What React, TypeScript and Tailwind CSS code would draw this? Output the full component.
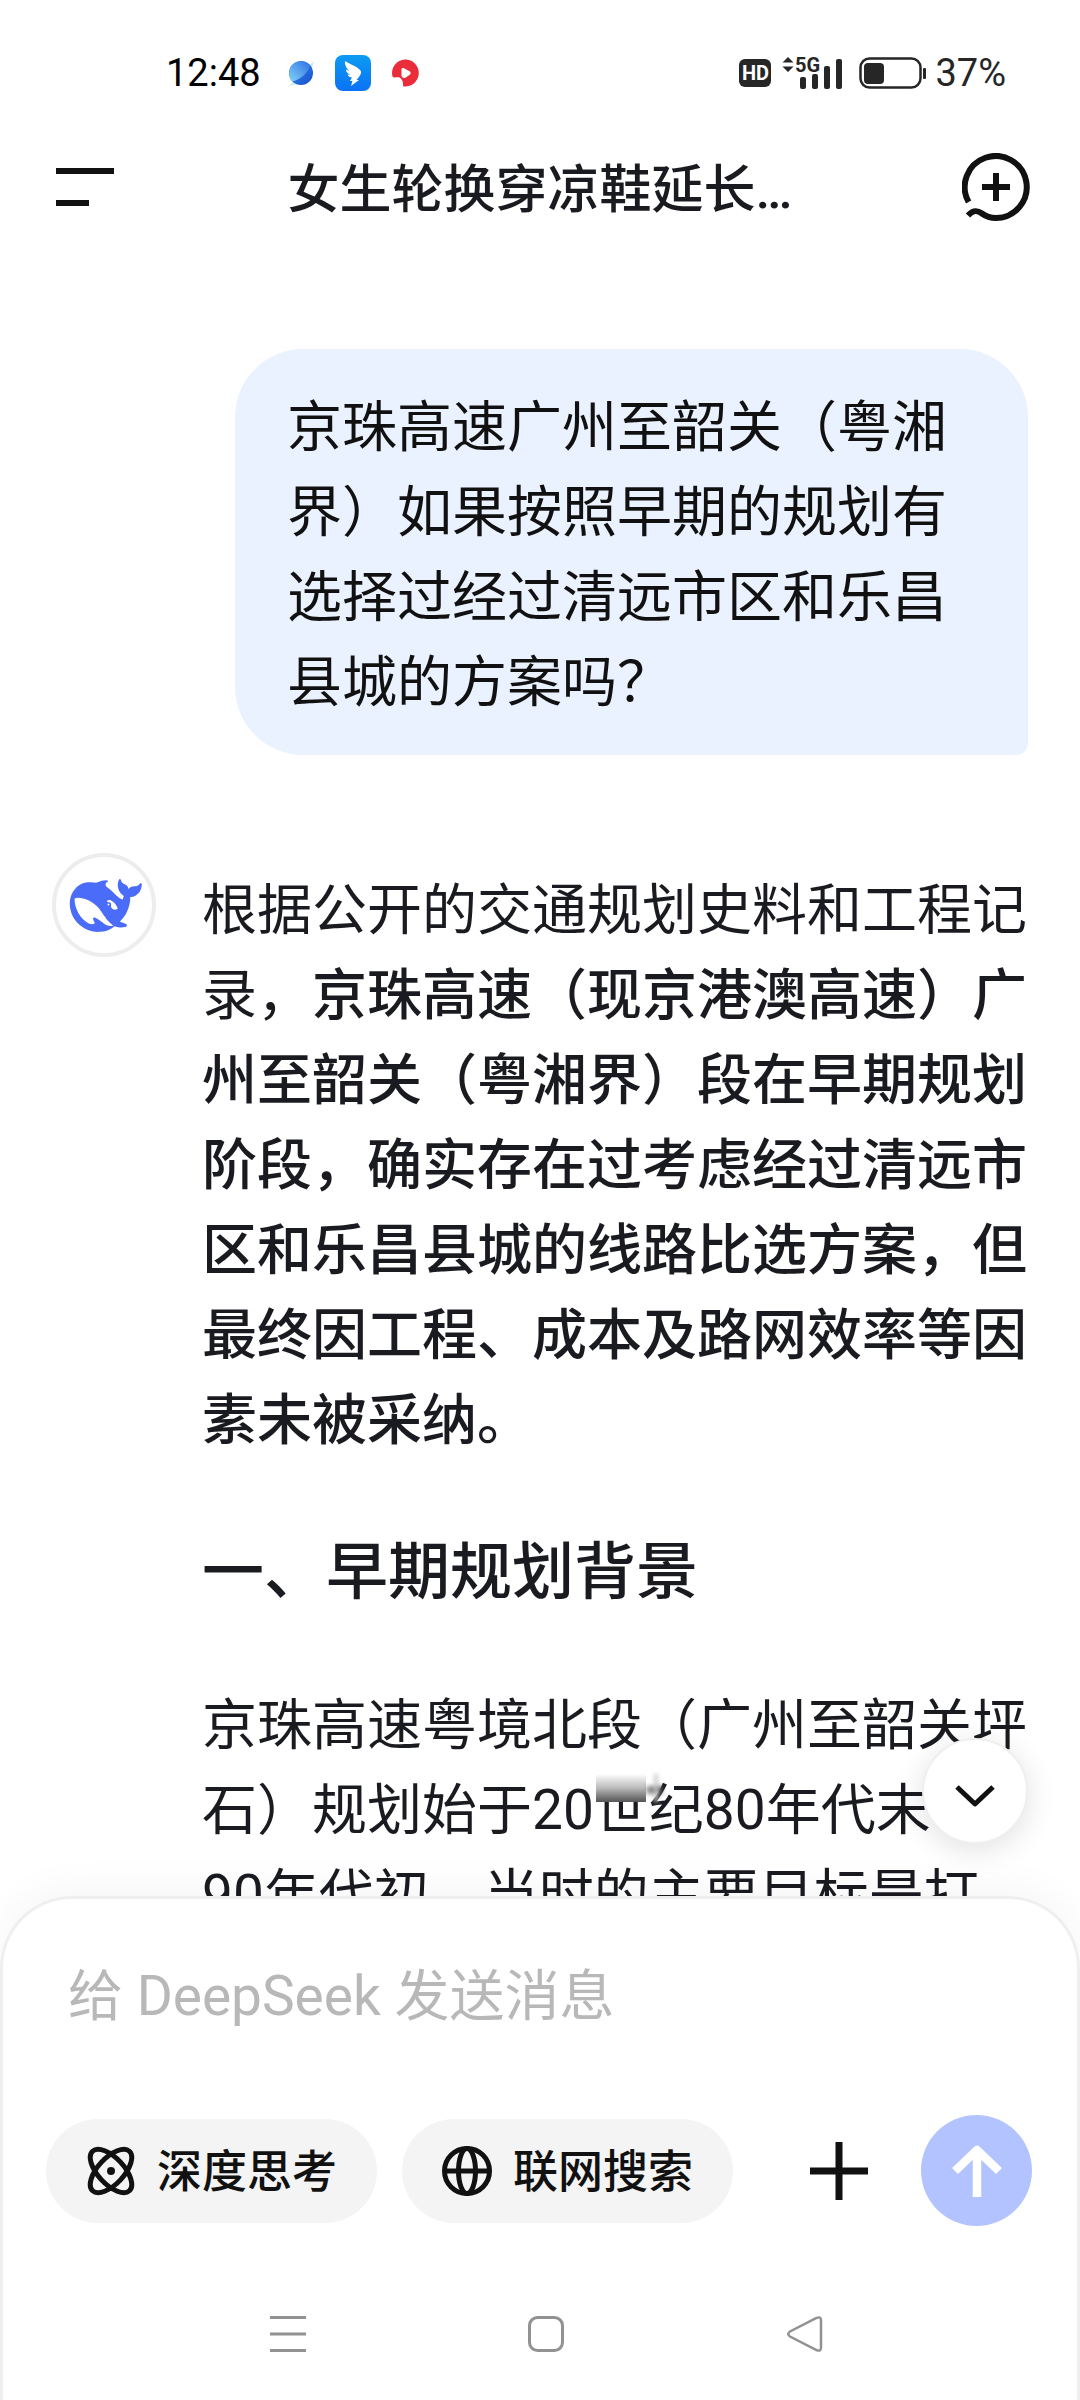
import { useState } from 'react';

const QUESTION = '京珠高速广州至韶关（粤湘界）如果按照早期的规划有选择过经过清远市区和乐昌县城的方案吗？';

function DockIcons() {
  return (
    <div className="flex items-center gap-5">
      <svg className="size-7" viewBox="0 0 28 28">
        <defs>
          <linearGradient id="planet" x1="0" y1="0" x2="1" y2="1">
            <stop offset="0" stopColor="#3f8ff0" />
            <stop offset="1" stopColor="#1450cc" />
          </linearGradient>
          <linearGradient id="planetLight" x1="0" y1="1" x2="1" y2="0">
            <stop offset="0" stopColor="#7fd4f7" />
            <stop offset="1" stopColor="#2f6fe4" />
          </linearGradient>
        </defs>
        <path d="M2 27 L27 2 L24 12 L12 24 Z" fill="#c3ebfb" />
        <circle cx="14" cy="14" r="12" fill="url(#planet)" />
        <path d="M5.500 22.500 A12 12 0 0 1 23 6 C21.500 13 14 20.500 5.500 22.500 Z" fill="url(#planetLight)" />
      </svg>
      <svg className="size-9" viewBox="0 0 36 36">
        <defs>
          <linearGradient id="wing" x1="0" y1="0" x2="0" y2="1">
            <stop offset="0" stopColor="#0d9bf2" />
            <stop offset="1" stopColor="#0a72f5" />
          </linearGradient>
        </defs>
        <rect width="36" height="36" rx="8" fill="url(#wing)" />
        <path d="M10 6 C14 9 22 11 25.500 15.500 C27 18 25 20 24 22 L21.500 25 H24 L16 31 L17.500 26 H15 L17 22.500 C14.500 22.500 13 21 12.500 19.500 L15.500 19.800 C12.500 18.500 11 16.500 10.800 14.500 L14.500 16 C11.500 13.500 9.500 9.500 10 6 Z" fill="#fff" />
      </svg>
      <svg className="size-7" viewBox="0 0 28 28">
        <path d="M14 0.500 A13.500 13.500 0 1 1 12 27.300 C12.500 24 11.500 20 8.500 18.500 C6 17.500 3 19.500 1.500 17.500 A13.500 13.500 0 0 1 14 0.500 Z" fill="#ea2d3a" />
        <path d="M10.500 10.500 Q10.500 8.500 12.500 9 L19 12.500 Q20.500 14 19 15.500 L14 19 Q11.500 19.500 10.500 17 Z" fill="#fff" />
      </svg>
    </div>
  );
}

function StatusBar() {
  return (
    <div className="flex h-[146px] items-center justify-between pl-[166px] pr-[74px] text-[38px] leading-none text-black">
      <div className="flex items-center gap-[26px]">
        <span>12:48</span>
        <DockIcons />
      </div>
      <div className="flex items-center text-[#262626]">
        <span className="flex h-7 w-8 items-center justify-center rounded-md bg-[#262626] text-[20px] font-bold text-white">
          HD
        </span>
        <svg className="ml-3 h-9 w-[60px] overflow-visible" viewBox="0 0 60 36" fill="currentColor">
          <path d="M5 2 L10.500 7.500 H-0.500 Z M5 17 L10.500 11.500 H-0.500 Z" />
          <text x="12" y="17" fontSize="20" fontWeight="700" fontFamily="Roboto, sans-serif">5G</text>
          <rect x="17" y="22" width="6" height="12" rx="2" />
          <rect x="29" y="19" width="6" height="15" rx="2" />
          <rect x="41" y="11" width="6" height="23" rx="2" />
          <rect x="53" y="4" width="6" height="30" rx="2" />
        </svg>
        <svg className="ml-4 h-8 w-[68px]" viewBox="0 0 68 32">
          <rect x="1.500" y="1.500" width="60" height="29" rx="9" fill="none" stroke="currentColor" strokeWidth="2.500" />
          <rect x="5" y="6" width="20" height="21" rx="4" fill="currentColor" />
          <rect x="64" y="11" width="3" height="11" rx="1" fill="currentColor" />
        </svg>
        <span className="ml-2">37%</span>
      </div>
    </div>
  );
}

function Header() {
  return (
    <header className="grid h-[82px] grid-cols-[1fr_auto_1fr] items-center px-[50px] text-[#111]">
      <button aria-label="菜单" className="justify-self-start">
        <svg className="h-[68px] w-[68px]" viewBox="0 0 68 68" stroke="currentColor" strokeWidth="6">
          <path d="M6 18H64M6 50H39" />
        </svg>
      </button>
      <h1 className="pt-2 text-[52px] font-medium leading-[74px] text-[#1a1b20]">女生轮换穿凉鞋延长…</h1>
      <button aria-label="新对话" className="justify-self-end">
        <svg className="h-[68px] w-[68px]" viewBox="0 0 68 68" fill="none" stroke="currentColor" strokeWidth="6">
          <path d="M6.600 49 A31 31 0 1 1 34 65 C28 65 24 63.500 20 60.500 C15 57 11 57 6 62.500" />
          <path d="M34 20V48M20 34H48" />
        </svg>
      </button>
    </header>
  );
}

function Avatar() {
  return (
    <div className="flex size-[104px] shrink-0 items-center justify-center rounded-full border-4 border-[#ededed]">
      <svg className="size-[72px] overflow-visible" viewBox="-0.6 -0.3 24 24" fill="#4a6cf9">
        <path d="M23.748 4.482c-.254-.124-.364.113-.512.234-.051.039-.094.09-.137.136-.372.397-.806.657-1.373.626-.829-.046-1.537.214-2.163.848-.133-.782-.575-1.248-1.247-1.548-.352-.156-.708-.311-.955-.65-.172-.241-.219-.51-.305-.774-.055-.16-.11-.323-.293-.35-.2-.031-.278.136-.356.276-.313.572-.434 1.202-.422 1.84.027 1.436.633 2.58 1.838 3.393.137.093.172.187.129.323-.082.28-.18.552-.266.833-.055.179-.137.217-.329.14a5.526 5.526 0 01-1.736-1.18c-.857-.828-1.631-1.742-2.597-2.458a11.365 11.365 0 00-.689-.471c-.985-.957.13-1.743.388-1.836.27-.098.093-.432-.779-.428-.872.004-1.67.295-2.687.684a3.055 3.055 0 01-.465.137 9.597 9.597 0 00-2.883-.102c-1.885.21-3.39 1.102-4.497 2.623C.082 8.606-.231 10.684.152 12.85c.403 2.284 1.569 4.175 3.36 5.653 1.858 1.533 3.997 2.284 6.438 2.14 1.482-.085 3.133-.284 4.994-1.86.47.234.962.327 1.78.397.63.059 1.236-.03 1.705-.128.735-.156.684-.837.419-.961-2.155-1.004-1.682-.595-2.113-.926 1.096-1.296 2.746-2.642 3.392-7.003.05-.347.007-.565 0-.845-.004-.17.035-.237.23-.256a4.173 4.173 0 001.545-.475c1.396-.763 1.96-2.015 2.093-3.517.02-.23-.004-.467-.247-.588zM11.581 18c-2.089-1.642-3.102-2.183-3.52-2.16-.392.024-.321.471-.235.763.09.288.207.486.371.739.114.167.192.416-.113.603-.673.416-1.842-.14-1.897-.167-1.361-.802-2.5-1.86-3.301-3.307-.774-1.393-1.224-2.887-1.298-4.482-.02-.386.093-.522.477-.592a4.696 4.696 0 011.529-.039c2.132.312 3.946 1.265 5.468 2.774.868.86 1.525 1.887 2.202 2.891.72 1.066 1.494 2.082 2.48 2.914.348.292.625.514.891.677-.802.09-2.14.11-3.054-.614zm1-6.44a.306.306 0 01.415-.287.302.302 0 01.2.288.306.306 0 01-.31.307.303.303 0 01-.304-.308zm3.11 1.596c-.2.081-.399.151-.59.16a1.245 1.245 0 01-.798-.254c-.274-.23-.47-.358-.552-.758a1.73 1.73 0 01.016-.588c.07-.327-.008-.537-.239-.727-.187-.156-.426-.199-.688-.199a.559.559 0 01-.254-.078c-.11-.054-.2-.19-.114-.358.028-.054.16-.186.192-.21.356-.202.767-.136 1.146.016.352.144.618.408 1.001.782.391.451.462.576.685.914.176.265.336.537.445.848.067.195-.019.354-.25.452z" />
      </svg>
    </div>
  );
}

function Answer() {
  return (
    <div className="mt-[98px] flex items-start gap-[46px]">
      <Avatar />
      <div className="min-w-0 flex-1 pt-[15px] text-[#1a1b20]">
        <p>
          根据公开的交通规划史料和工程记录，
          <strong className="font-medium">
            京珠高速（现京港澳高速）广州至韶关（粤湘界）段在早期规划阶段，确实存在过考虑经过清远市区和乐昌县城的线路比选方案，但最终因工程、成本及路网效率等因素未被采纳。
          </strong>
        </p>
        <h2 className="my-[60px] text-[62px] font-medium leading-[100px]">一、早期规划背景</h2>
        <p>
          京珠高速粤境北段（广州至韶关坪石）规划始于20
          <span className="relative">
            世纪
            <span className="absolute -top-1 left-0.5 h-7 w-[50px] bg-linear-to-b from-white via-[#bbb] to-[#555]" />
            <span className="absolute left-[52px] top-2 h-2 w-4 bg-linear-to-r from-[#aaa] to-[#444] blur-[2px]" />
            <span className="absolute -top-1 left-[60px] h-7 w-1 bg-[#ccc] blur-[2px]" />
          </span>
          80年代末、90年代初，当时的主要目标是打
        </p>
      </div>
    </div>
  );
}

function Composer() {
  const [message, setMessage] = useState('');
  const chip = 'flex h-[104px] items-center gap-[21px] rounded-full bg-[#f4f4f4] px-10 text-[45px] font-medium';

  return (
    <footer className="relative rounded-t-[72px] border-x-3 border-t-3 border-[#efefef] bg-white shadow-[0_-8px_40px_rgba(0,0,0,0.04)]">
      <div className="pl-[43px] pr-[45px] pt-[54px] text-[#111]">
        <input
          aria-label="消息"
          value={message}
          onChange={(e) => setMessage(e.target.value)}
          placeholder="给 DeepSeek 发送消息"
          className="block h-[85px] w-full px-[22px] text-[55px] outline-none placeholder:text-[#b8b8b8]"
        />
        <div className="mt-[77px] flex items-center">
          <button className={chip}>
            <svg className="size-[50px]" viewBox="0 0 50 50" fill="none" stroke="currentColor" strokeWidth="5">
              <ellipse cx="25" cy="25" rx="27" ry="13" transform="rotate(47 25 25)" />
              <ellipse cx="25" cy="25" rx="27" ry="13" transform="rotate(-47 25 25)" />
              <circle cx="25" cy="25" r="4" fill="currentColor" stroke="none" />
            </svg>
            <span className="pt-1">深度思考</span>
          </button>
          <button className={`${chip} ml-[25px]`}>
            <svg className="size-[50px]" viewBox="0 0 50 50" fill="none" stroke="currentColor" strokeWidth="5">
              <circle cx="25" cy="25" r="22.500" />
              <ellipse cx="25" cy="25" rx="8.500" ry="22.500" />
              <path d="M3 25H47" />
            </svg>
            <span className="pt-1">联网搜索</span>
          </button>
          <button aria-label="添加附件" className="ml-auto mr-[53px]">
            <svg className="size-[58px]" viewBox="0 0 58 58" stroke="currentColor" strokeWidth="7">
              <path d="M29 0V58M0 29H58" />
            </svg>
          </button>
          <button aria-label="发送" className="flex size-[111px] items-center justify-center rounded-full bg-[#b3c3ff]">
            <svg className="size-[52px]" viewBox="0 0 52 52" fill="none" stroke="#fff" strokeWidth="8.500" strokeLinejoin="round">
              <path d="M26 52V6M4 26L26 5L48 26" />
            </svg>
          </button>
        </div>
      </div>
      <SystemNav />
    </footer>
  );
}

function SystemNav() {
  const item = 'flex justify-center';
  return (
    <nav className="mt-[42px] grid h-[132px] grid-cols-3 items-center pl-[156px] pr-[143px] text-[#929292]">
      <button aria-label="最近任务" className={item}>
        <svg className="size-9" viewBox="0 0 36 36" stroke="currentColor" strokeWidth="3">
          <path d="M0 1.500H36M0 18H36M0 34.500H36" />
        </svg>
      </button>
      <button aria-label="主页" className={item}>
        <svg className="size-9" viewBox="0 0 36 36" fill="none" stroke="currentColor" strokeWidth="3">
          <rect x="1.500" y="1.500" width="33" height="33" rx="8" />
        </svg>
      </button>
      <button aria-label="返回" className={item}>
        <svg className="size-9" viewBox="0 0 36 36" fill="none" stroke="currentColor" strokeWidth="2.500">
          <path d="M29.500 2 Q34 0 34 4.500 V31.500 Q34 36 29.500 34 L3 20.500 Q-0.500 18 3 15.500 Z" />
        </svg>
      </button>
    </nav>
  );
}

export default function App() {
  return (
    <div
      lang="zh-CN"
      className="flex h-screen flex-col overflow-hidden bg-white font-[Roboto,'Noto_Sans_CJK_SC',sans-serif]"
    >
      <StatusBar />
      <Header />
      <div className="relative flex min-h-0 flex-1 flex-col">
        <main className="min-h-0 flex-1 overflow-hidden pl-[52px] pr-[50px] pt-[121px] text-[55px] leading-[85px]">
          <p className="ml-[183px] mr-0.5 rounded-[68px] rounded-br-xl bg-[#ebf2ff] px-[52px] pb-[30px] pt-9 text-[#111]">
            {QUESTION}
          </p>
          <Answer />
        </main>
        <button
          aria-label="滚动到底部"
          className="absolute bottom-[52px] right-[52px] flex size-[106px] items-center justify-center rounded-full border-2 border-[#efefef] bg-white text-[#111] shadow-[0_6px_30px_rgba(0,0,0,0.12)]"
        >
          <svg className="size-11" viewBox="0 0 44 44" fill="none" stroke="currentColor" strokeWidth="5">
            <path d="M4 18L22 35L40 18" strokeLinejoin="round" />
          </svg>
        </button>
      </div>
      <Composer />
    </div>
  );
}
